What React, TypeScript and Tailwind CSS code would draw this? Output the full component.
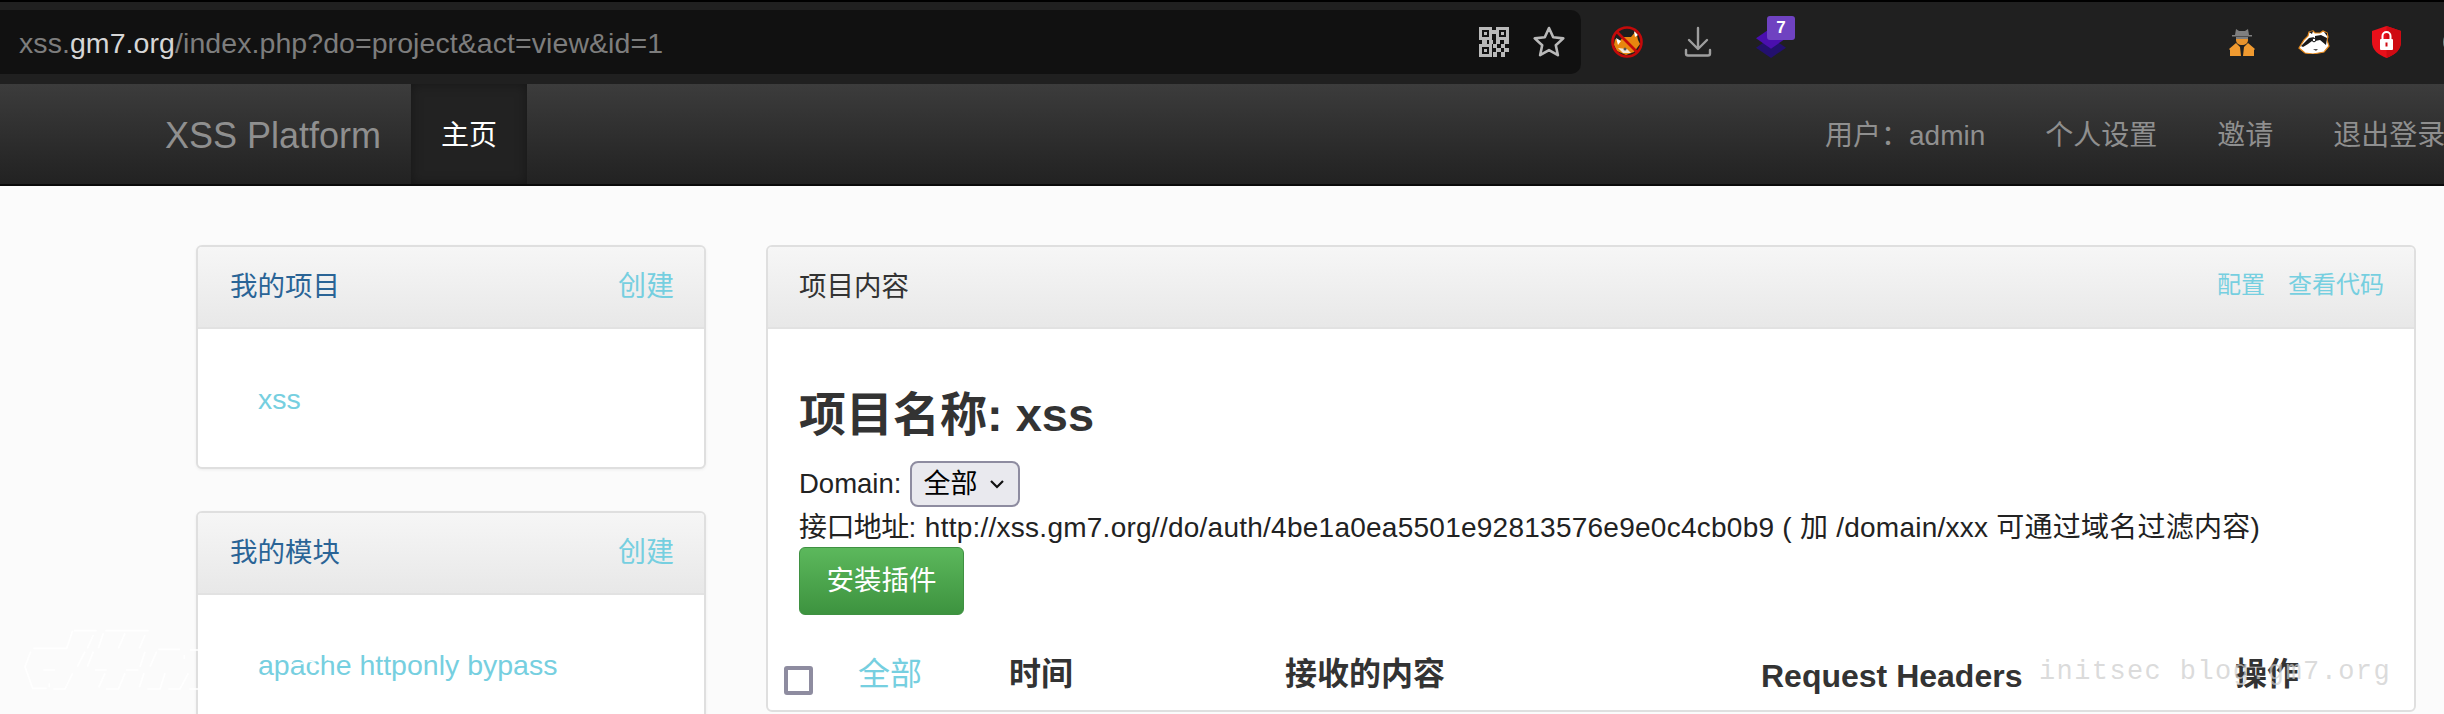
const sans = "font-['Liberation_Sans','Noto_Sans_CJK_SC',sans-serif]";

function QrIcon() {
  return (
    <svg width="30" height="30" viewBox="0 0 30 30" fill="#b9b9b9">
      <path fillRule="evenodd" d="M0 0h13v13H0zM3 3v7h7V3zM17 0h13v13H17zM20 3v7h7V3zM0 17h13v13H0zM3 20v7h7v-7z" />
      <rect x="5" y="5" width="3" height="3" />
      <rect x="22" y="5" width="3" height="3" />
      <rect x="5" y="22" width="3" height="3" />
      <rect x="13" y="3" width="4" height="4" />
      <rect x="3" y="13" width="5" height="4" />
      <rect x="10" y="13" width="4" height="4" />
      <rect x="17" y="13" width="4" height="4" />
      <rect x="25" y="13" width="5" height="4" />
      <rect x="14" y="17" width="4" height="4" />
      <rect x="22" y="17" width="4" height="4" />
      <rect x="17" y="21" width="5" height="4" />
      <rect x="25" y="21" width="5" height="4" />
      <rect x="14" y="25" width="4" height="5" />
      <rect x="22" y="25" width="4" height="5" />
    </svg>
  );
}

function StarIcon() {
  return (
    <svg width="34" height="34" viewBox="0 0 34 34" fill="none" stroke="#b9b9b9" strokeWidth="2.6" strokeLinejoin="round">
      <path d="M17 3l4.2 9.3 10.1 1.1-7.5 6.8 2.1 10L17 25.1l-8.9 5.1 2.1-10-7.5-6.8 10.1-1.1z" />
    </svg>
  );
}

function FoxBlockedIcon() {
  return (
    <svg width="32" height="32" viewBox="0 0 32 32">
      <circle cx="16" cy="16" r="14.5" fill="#1d1d1d" />
      <path d="M4 13l5 2 3-4 8 0 5-6 2 9 2 4-6 8-8 3-9-4-3-6z" fill="#e8860f" />
      <path d="M5 12l5 3-3 4zM23 5l4 4-3 2z" fill="#fff" />
      <path d="M7 22l9 1 4 4-8 0z" fill="#f3e9d8" />
      <circle cx="14" cy="23" r="1.5" fill="#555" />
      <circle cx="16" cy="16" r="14.5" fill="none" stroke="#c40a0a" strokeWidth="2.6" />
      <path d="M6 6l20 20" stroke="#c40a0a" strokeWidth="2.6" />
    </svg>
  );
}

function DownloadIcon() {
  return (
    <svg width="28" height="32" viewBox="0 0 28 32" fill="none" stroke="#9e9e9e" strokeWidth="2.4" strokeLinecap="round" strokeLinejoin="round">
      <path d="M14 2v20M5 14l9 9 9-9" />
      <path d="M2 24v3.5a2 2 0 0 0 2 2h20a2 2 0 0 0 2-2V24" />
    </svg>
  );
}

function StackBadge() {
  return (
    <div className="relative w-[44px] h-[44px]">
      <svg width="32" height="30" viewBox="0 0 34 32" className="absolute left-0 top-[12px]">
        <path d="M17 10l16 11-16 11L1 21z" fill="#23106e" />
        <path d="M17 0l16 11-16 11L1 11z" fill="#4a0fae" />
      </svg>
      <div className={`absolute left-[12px] top-0 w-[28px] h-[24px] rounded-[3px] bg-[#6f42c1] text-white text-[17px] font-bold leading-[24px] text-center ${sans}`}>7</div>
    </div>
  );
}

function SpyIcon() {
  return (
    <svg width="26" height="28" viewBox="0 0 26 28">
      <path d="M7 1l3 2h6l3-2 1 6h3v1.600H3V7h3z" fill="#7f7f7f" />
      <path d="M7 9h12v3c0 3-2.500 5-6 5s-6-2-6-5z" fill="#e8932c" />
      <path d="M7 9h12v2H7z" fill="#7f7f7f" />
      <path d="M7 15l4 4 1 9H1v-6l-1-1z" fill="#f09a30" />
      <path d="M19 15l-4 4-1 9h11v-6l1-1z" fill="#f09a30" />
    </svg>
  );
}

function BadgerIcon() {
  return (
    <svg width="32" height="24" viewBox="0 0 32 24">
      <path d="M1 18l5-8 4-4 1-4 4-1 2 2 5 0 3-2 4 2 1 4-1 3 2 6-5 6-11 2-8-1z" fill="#fff" stroke="#e68a1e" strokeWidth="1.200" />
      <path d="M3 16l8-8 5-1-2 4-4 3-5 3z" fill="#1a1a1a" />
      <path d="M17 6l6-1 6 3-1 7-6-5-5 1z" fill="#1a1a1a" />
      <circle cx="16" cy="10" r="1.800" fill="#fff" stroke="#111" strokeWidth="1" />
      <path d="M11 2l4-1-1 3zM26 2l3 1v3z" fill="#1a1a1a" />
      <path d="M15 19h5l-2 2z" fill="#555" />
    </svg>
  );
}

function ShieldIcon() {
  return (
    <svg width="29" height="32" viewBox="0 0 29 32">
      <path d="M14.500 0L29 5v11c0 8-6.500 13-14.500 16C6.500 29 0 24 0 16V5z" fill="#e8101a" />
      <path d="M14.500 0L29 5v11c0 8-6.500 13-14.500 16z" fill="#cf0a12" />
      <rect x="8" y="13" width="13" height="11" rx="1" fill="#fff" />
      <path d="M10.500 13V10a4 4 0 0 1 8 0v3" fill="none" stroke="#fff" strokeWidth="2" />
      <rect x="13.500" y="16.500" width="2" height="4" fill="#cf0a12" />
    </svg>
  );
}

function SideCard({ title, link }: { title: string; link: string }) {
  return (
    <div className="w-[510px] h-[224px] shrink-0 rounded-[6px] border-2 border-[#dfdfdf] bg-white shadow-[0_1px_3px_rgba(0,0,0,0.06)] overflow-hidden">
      <div className="h-[82px] pl-[32px] pr-[30px] flex items-center justify-between border-b-2 border-[#e2e2e2] bg-linear-to-b from-[#f6f6f6] to-[#e8e8e8]">
        <span className="text-[27.5px] text-[#2a6496]">{title}</span>
        <span className="text-[28px] text-[#76cfe0]">创建</span>
      </div>
      <div className="pt-[48px] pl-[60px] text-[28.5px] leading-[44px] text-[#76cfe0]">{link}</div>
    </div>
  );
}

export default function App() {
  return (
    <div className={`relative w-[2444px] h-[714px] overflow-hidden bg-[#fbfbfb] ${sans}`}>
      {/* browser toolbar */}
      <div className="h-[84px] border-t-2 border-black bg-[#202020] flex items-start overflow-hidden">
        <div className="mt-[8px] w-[1581px] h-[64px] shrink-0 rounded-r-[10px] bg-[#111111] flex items-center pl-[19px] pr-[15px]">
          <span className="flex-1 pt-[2px] text-[28.5px] tracking-[0.07px] text-[#7d7d7d] whitespace-nowrap">
            xss.<span className="text-[#d6d6d6]">gm7.org</span>/index.php?do=project&amp;act=view&amp;id=1
          </span>
          <div className="flex items-center gap-[23px]">
            <QrIcon />
            <StarIcon />
          </div>
        </div>
        <div className="ml-[30px] mt-[22px] flex items-center shrink-0">
          <FoxBlockedIcon />
          <div className="ml-[41px]"><DownloadIcon /></div>
          <div className="ml-[43px] -mt-[8px]"><StackBadge /></div>
        </div>
        <div className="ml-[430px] mt-[24px] flex items-center shrink-0">
          <SpyIcon />
          <div className="ml-[43px]"><BadgerIcon /></div>
          <div className="ml-[42px]"><ShieldIcon /></div>
          <div className="ml-[42px] w-[24px] h-[24px] shrink-0 rounded-full bg-[#6f8a8c]" />
        </div>
      </div>

      {/* site navbar */}
      <div className="h-[102px] border-b-2 border-[#0a0a0a] bg-linear-to-b from-[#3c3c3c] to-[#222222] flex items-stretch whitespace-nowrap">
        <div className="ml-[165px] w-[246px] shrink-0 pt-[4px] flex items-center text-[36px] text-[#8f8f8f]">XSS Platform</div>
        <div className="w-[116px] shrink-0 pt-[4px] flex items-center justify-center bg-[#222222] shadow-[inset_0_0_12px_rgba(0,0,0,0.35)] text-[28px] text-white">主页</div>
        <div className="ml-[1298px] pt-[4px] flex items-center text-[28px] text-[#8f8f8f]">
          <span>用户：admin</span>
          <span className="ml-[60px]">个人设置</span>
          <span className="ml-[60px]">邀请</span>
          <span className="ml-[60px]">退出登录</span>
        </div>
      </div>

      {/* page content */}
      <div className="flex items-start pt-[59px] pl-[196px]">
        <div className="flex flex-col gap-[42px] w-[510px] shrink-0">
          <SideCard title="我的项目" link="xss" />
          <SideCard title="我的模块" link="apache httponly bypass" />
        </div>

        <div className="ml-[60px] w-[1650px] h-[467px] shrink-0 rounded-[6px] border-2 border-[#dfdfdf] bg-white overflow-hidden">
          <div className="h-[82px] pl-[31px] pr-[30px] flex items-center justify-between border-b-2 border-[#e2e2e2] bg-linear-to-b from-[#f6f6f6] to-[#e8e8e8]">
            <span className="text-[27.5px] text-[#333333]">项目内容</span>
            <div className="flex gap-[23px] -mt-[4px] text-[24px] text-[#76cfe0]">
              <span>配置</span>
              <span>查看代码</span>
            </div>
          </div>
          <div className="pl-[31px]">
            <h2 className="mt-[55px] text-[47px] leading-[62px] font-bold text-[#333333]">项目名称: xss</h2>
            <div className="mt-[16px] h-[44px] flex items-center text-[27.5px] text-[#222222]">
              Domain:
              <div className="ml-[9px] w-[110px] h-[46px] rounded-[8px] border-2 border-[#8e8ca0] bg-[#e9e9ee] flex items-center pl-[11px] gap-[12px] text-[27px] text-black">
                全部
                <svg width="16" height="10" viewBox="0 0 16 10" fill="none" stroke="#111" strokeWidth="2.2"><path d="M2 2l6 6 6-6" /></svg>
              </div>
            </div>
            <div className="h-[43px] flex items-center text-[28px] tracking-[0.25px] text-[#222222] whitespace-nowrap">
              <span className="tracking-[-0.6px] mr-[1px]">接口地址:</span>&nbsp;http://xss.gm7.org//do/auth/4be1a0ea5501e92813576e9e0c4cb0b9 ( 加 /domain/xxx 可通过域名过滤内容)
            </div>
            <div className="mt-[-2px] w-[165px] h-[68px] rounded-[6px] border border-[#3f9142] bg-linear-to-b from-[#5cb85c] to-[#3d933f] flex items-center justify-center text-[27.5px] text-white">
              安装插件
            </div>
            <div className="-ml-[15px] mt-[31px] flex items-center h-[56px] text-[32px] font-bold text-[#333333] whitespace-nowrap">
              <div className="mt-[12px] w-[29px] h-[29px] shrink-0 rounded-[3px] border-4 border-[#8e8ca0] bg-white" />
              <span className="ml-[45px] w-[151px] shrink-0 font-normal text-[#76cfe0]">全部</span>
              <span className="w-[276px] shrink-0">时间</span>
              <span className="w-[476px] shrink-0">接收的内容</span>
              <span className="w-[474px] shrink-0 pt-[3px]">Request Headers</span>
              <span>操作</span>
            </div>
          </div>
        </div>
      </div>

      {/* blog watermarks stamped over the screenshot */}
      <div className="absolute left-[2039px] top-[654px] font-['Liberation_Mono',monospace] text-[27px] leading-[36px] tracking-[1.4px] text-[#cccccc]/70 whitespace-nowrap">
        initsec blog.gm7.org
      </div>
      <svg className="absolute left-0 top-[610px]" width="340" height="104" viewBox="0 0 1020 312" fill="none" stroke="#ffffff" strokeWidth="5">
        <path d="M222 62h68M316 62h130M218 62l-18 53H100M280 75l-18 40M310 70l-15 45M375 70l-20 45M435 75l-17 40" />
        <path d="M92 125l-17 45 23 65h42M160 237h35l23-47M130 180h35M255 125l-23 45M280 125l-18 45M285 180h35" />
        <path d="M435 125l-15 45M470 125l-20 45M475 118h65M570 120h50M378 180h37M315 190l-19 42M375 190l-20 47h-37" />
        <path d="M432 190l-14 42M495 190l-15 47h-38M505 237h35l25-47M568 237h52M148 220v12M553 135v12" />
        <path d="M880 160h30M925 155l35-5M985 150h35" />
      </svg>
    </div>
  );
}
